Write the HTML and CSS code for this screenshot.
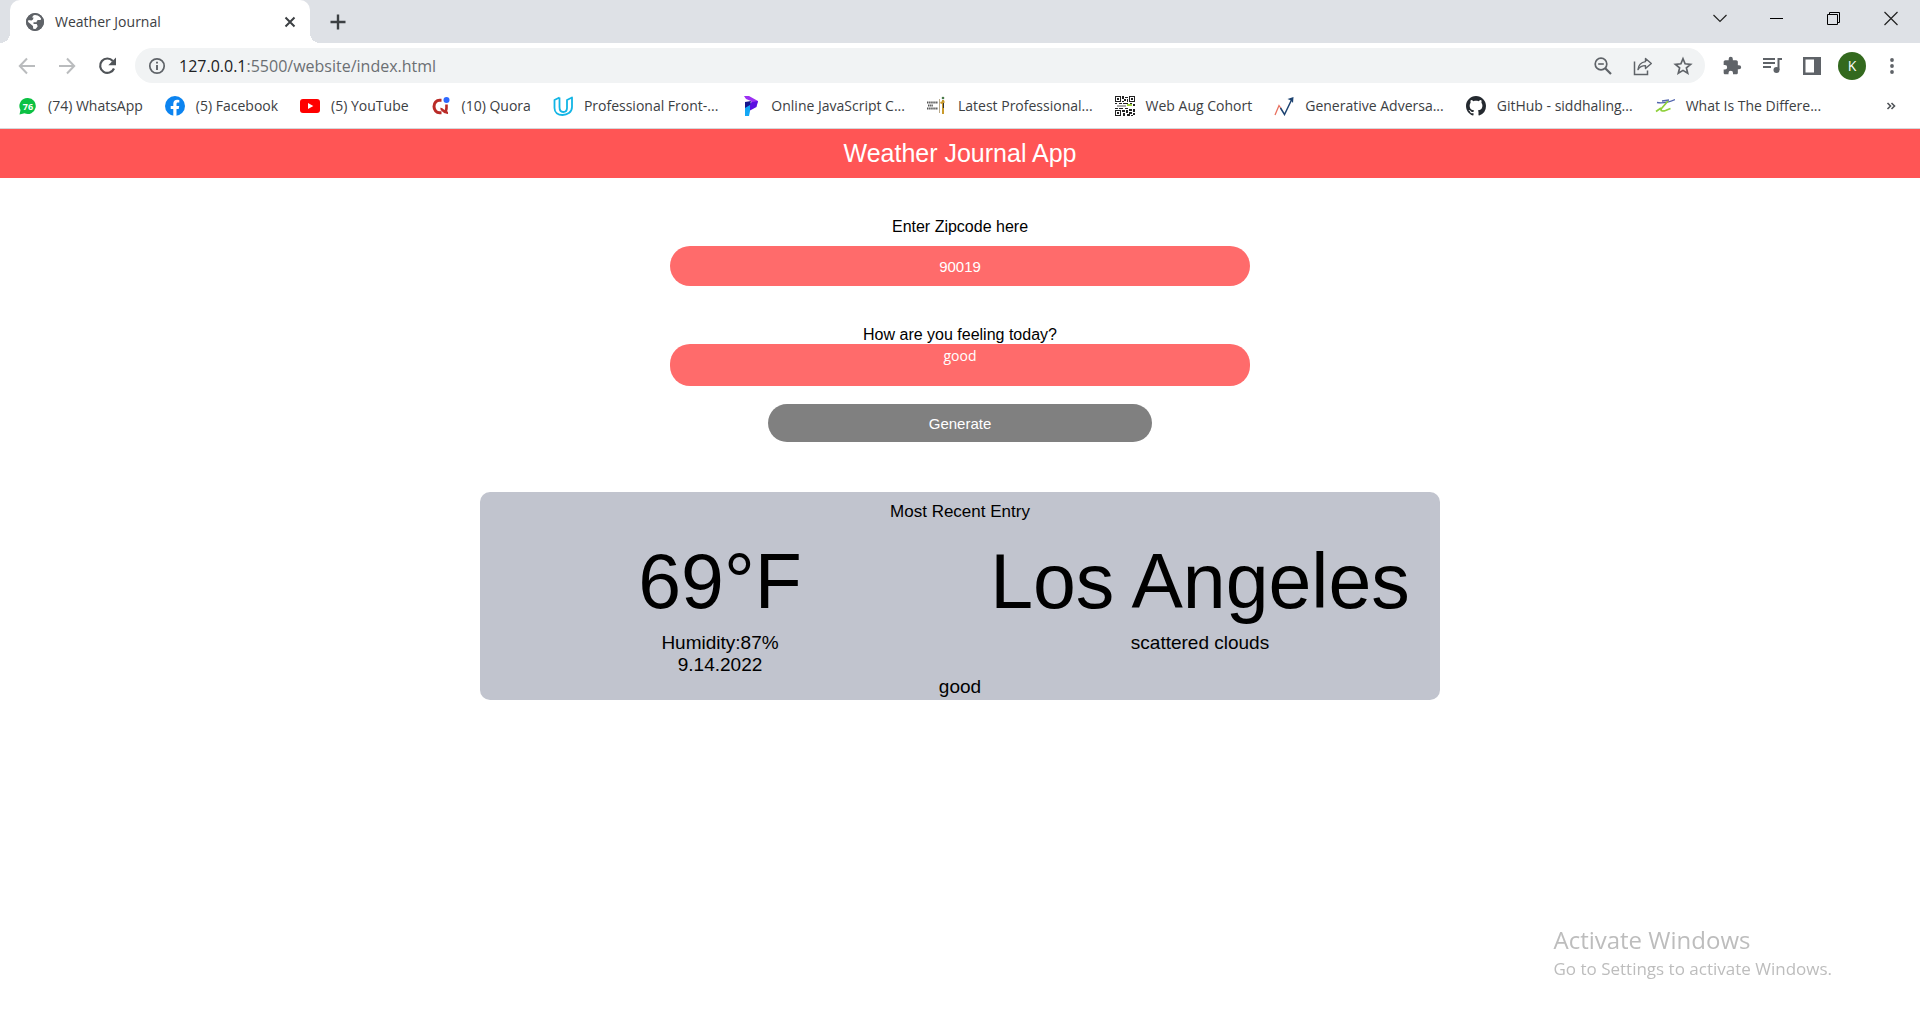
FILE: index.html
```html
<!DOCTYPE html>
<html lang="en">
<head>
<meta charset="utf-8">
<meta name="viewport" content="width=device-width, initial-scale=1">
<title>Weather Journal</title>
<link rel="stylesheet" href="styles.css">
</head>
<body>
<div class="browser">
  <div class="tabstrip">
    <div class="tab">
      <svg class="icon20" viewBox="0 0 20 20"><circle cx="10" cy="10" r="9" fill="#5f6368"/><path d="M9 2.500l5 .5 2.500 3.500-1 1.500h-3l-.8 2.200H8.500V12h3.200l1 2.200-2 2.800-2.500.5L8 14l-3-2.500L2.500 9.500 3 8l3.500.5L8 7.500 8.500 5.500H7z" fill="#fff"/><path d="M11 9.500l4.500 1.500 1 2-2.500.5-1.500-2z" fill="#5f6368"/><circle cx="10" cy="10" r="8" fill="none" stroke="#5f6368" stroke-width="2"/></svg>
      <span class="tab-title">Weather Journal</span>
      <button class="plain" aria-label="Close tab"><svg class="icon20" viewBox="0 0 20 20"><path d="M5.500 5.500l9 9m0-9l-9 9" stroke="#3c4043" stroke-width="2"/></svg></button>
    </div>
    <button class="plain newtab" aria-label="New tab"><svg class="icon20" viewBox="0 0 20 20"><path d="M10 2.500v15M2.500 10h15" stroke="#3c4043" stroke-width="2.400"/></svg></button>
    <div class="window-controls">
      <button class="plain" aria-label="Search tabs"><svg class="icon20" viewBox="0 0 20 20"><path d="M3.500 7l6.500 6.500L16.500 7" fill="none" stroke="#222" stroke-width="1.200"/></svg></button>
      <button class="plain" aria-label="Minimize"><svg class="icon20" viewBox="0 0 20 20"><path d="M3 10.500h13" stroke="#000"/></svg></button>
      <button class="plain" aria-label="Restore"><svg class="icon20" viewBox="0 0 20 20"><path d="M3.500 6.500h10v10h-10zM5.500 6.500v-2h10v10h-2" fill="none" stroke="#000"/></svg></button>
      <button class="plain" aria-label="Close"><svg class="icon20" viewBox="0 0 20 20"><path d="M3.500 4l13 13m0-13l-13 13" stroke="#222" stroke-width="1.200"/></svg></button>
    </div>
  </div>

  <div class="toolbar">
    <div class="nav">
      <button class="plain" aria-label="Back"><svg class="icon20" viewBox="0 0 20 20"><path d="M18 10H3M10 2.500L2.800 10l7.200 7.500" fill="none" stroke="#babcbe" stroke-width="2"/></svg></button>
      <button class="plain" aria-label="Forward"><svg class="icon20" viewBox="0 0 20 20"><path d="M2 10h15M10 2.500l7.200 7.500-7.200 7.500" fill="none" stroke="#babcbe" stroke-width="2"/></svg></button>
      <button class="plain" aria-label="Reload"><svg class="icon20" viewBox="0 0 20 20"><path d="M17 12.500A7.200 7.200 0 1 1 15.800 5" fill="none" stroke="#505458" stroke-width="2.200"/><path d="M19 1.500v7.700h-7.700z" fill="#505458"/></svg></button>
    </div>
    <div class="omnibox">
      <svg class="icon20" viewBox="0 0 20 20"><circle cx="10" cy="10" r="7.200" fill="none" stroke="#5f6368" stroke-width="1.700"/><path d="M10 9v5M10 5.800v1.800" stroke="#5f6368" stroke-width="1.900"/></svg>
      <div class="url" role="textbox" aria-label="Address" contenteditable="true" spellcheck="false"><span class="host">127.0.0.1</span>:5500/website/index.html</div>
      <div class="omni-actions">
        <button class="plain" aria-label="Zoom"><svg class="icon20" viewBox="0 0 20 20"><circle cx="8" cy="8" r="5.800" fill="none" stroke="#5f6368" stroke-width="1.700"/><path d="M5.200 8h5.600" stroke="#5f6368" stroke-width="1.600"/><path d="M12 12l6 6" stroke="#5f6368" stroke-width="2.200"/></svg></button>
        <button class="plain" aria-label="Share"><svg class="icon20" viewBox="0 0 20 20"><path d="M1.500 5.500v13h13v-4" fill="none" stroke="#5f6368" stroke-width="1.500"/><path d="M12.500 2.500l5.800 5-5.800 5V9.600c-3.600 0-6 1.300-7.500 4 .4-4.200 2.800-7.300 7.500-8z" fill="none" stroke="#5f6368" stroke-width="1.400" stroke-linejoin="round"/></svg></button>
        <button class="plain" aria-label="Bookmark"><svg class="icon20" viewBox="0 0 20 20"><path d="M10 2.700l2.100 5.100 5.500.5-4.200 3.600 1.300 5.400-4.700-2.900-4.700 2.900 1.300-5.400-4.200-3.600 5.500-.5z" fill="none" stroke="#5f6368" stroke-width="1.700"/></svg></button>
      </div>
    </div>
    <div class="extras">
      <button class="plain" aria-label="Extensions"><svg class="icon20" viewBox="0 0 24 24"><path d="M20.500 11H19V7c0-1.100-.9-2-2-2h-4V3.500a2.500 2.500 0 0 0-5 0V5H4c-1.100 0-2 .9-2 2v3.800h1.500a2.700 2.700 0 0 1 0 5.400H2V20c0 1.100.9 2 2 2h3.800v-1.500a2.700 2.700 0 0 1 5.400 0V22H17c1.100 0 2-.9 2-2v-4h1.500a2.500 2.500 0 0 0 0-5z" fill="#5f6368"/></svg></button>
      <button class="plain" aria-label="Media"><svg class="icon20" viewBox="0 0 20 20"><path d="M1 3h12M1 7h12M1 11h8M16.500 14V3H20" fill="none" stroke="#5f6368" stroke-width="2"/><circle cx="14.500" cy="14" r="3" fill="#5f6368"/></svg></button>
      <button class="plain" aria-label="Side panel"><svg class="icon20" viewBox="0 0 20 20"><path d="M1 1h18v18H1zM3.500 3.500v13h8.500v-13z" fill="#5f6368" fill-rule="evenodd"/></svg></button>
      <button class="plain avatar" aria-label="Profile">K</button>
      <button class="plain" aria-label="Menu"><svg class="icon20" viewBox="0 0 20 20"><circle cx="10" cy="4" r="1.900" fill="#5f6368"/><circle cx="10" cy="10" r="1.900" fill="#5f6368"/><circle cx="10" cy="16" r="1.900" fill="#5f6368"/></svg></button>
    </div>
  </div>

  <nav class="bookmarks">
    <a href="#"><svg class="icon20" viewBox="0 0 20 20"><path d="M11 2a8 8 0 1 1-3.500 15.300L2.500 18.500l1-4.500A8 8 0 0 1 11 2z" fill="#0cc143"/><text x="11" y="13.500" text-anchor="middle" font-size="9" font-weight="bold" fill="#fff">76</text></svg><span>(74) WhatsApp</span></a>
    <a href="#"><svg class="icon20" viewBox="0 0 20 20"><circle cx="10" cy="10" r="10" fill="#0c84f0"/><path d="M8.300 20v-7H5.700v-3h2.600V7.800c0-2.600 1.500-4 3.900-4l2.100.2v2.500h-1.200c-1.200 0-1.600.7-1.600 1.500v2h2.700l-.5 3h-2.200v7z" fill="#fff"/></svg><span>(5) Facebook</span></a>
    <a href="#"><svg class="icon20" viewBox="0 0 20 20"><rect y="3" width="20" height="14" rx="3" fill="#f00"/><path d="M8 7l5.300 3L8 13z" fill="#fff"/></svg><span>(5) YouTube</span></a>
    <a href="#"><svg class="icon20" viewBox="0 0 20 20"><path d="M10.500 4.300H8.500a5.500 6.200 0 0 0 0 12.400h2" fill="none" stroke="#b92b27" stroke-width="3"/><path d="M15.500 8.500V12c0 2-.8 3.500-2.500 4.500M9.500 13c2.500-.5 2.500 4 7.500 3.700" fill="none" stroke="#b92b27" stroke-width="2.600"/><circle cx="15.500" cy="4" r="3" fill="#2e69ff"/></svg><span>(10) Quora</span></a>
    <a href="#"><svg class="icon20" viewBox="0 0 20 20"><path d="M6.500 1.500L1.500 4v8c0 4.500 3.500 7 8 7s9.500-2.500 9.500-8V1.500L14 4v8c0 2.500-1.500 4-3.800 4M6.500 1.500V11c0 3 1.500 5 3.700 5M14 4v8" fill="none" stroke="#12b5e5" stroke-width="1.800" stroke-linejoin="round"/></svg><span>Professional Front-...</span></a>
    <a href="#"><svg class="icon20" viewBox="0 0 20 20"><path d="M4 0h5l9 5-1 3-4.500 1L11 5 6 3z" fill="#9b30f2"/><path d="M12 6l6-1-1.500 6-6.500 3.500L5 14V11z" fill="#5a0fe0"/><path d="M5 6l6-1-1 4-5 4z" fill="#15158c"/><path d="M5 12l5-3v6l-1 5H5z" fill="#13a7f5"/></svg><span>Online JavaScript C...</span></a>
    <a href="#"><svg class="icon20" viewBox="0 0 20 20"><path d="M0 6.500h11M1 9.500h5M0 12.500h11" stroke="#555" stroke-width="2" stroke-dasharray="1.500 .6"/><path d="M12.500 3v14" stroke="#b9a98a"/><path d="M16 4v14M13.500 7l4-1.500" stroke="#c99a2c" stroke-width="2"/><circle cx="16" cy="2" r="1.300" fill="#4a7a4a"/><path d="M16.500 7v5" stroke="#333"/></svg><span>Latest Professional...</span></a>
    <a href="#"><svg class="icon20" viewBox="0 0 20 20" shape-rendering="crispEdges"><path fill="#222" fill-rule="evenodd" d="M0 0h6v6H0zM1 1v4h4V1zM14 0h6v6h-6zM15 1v4h4V1zM0 14h6v6H0zM1 15v4h4v-4zM2 2h2v2H2zM16 2h2v2h-2zM2 16h2v2H2zM7 0h2v3H7zM10 1h3v1h-3zM9 3h2v2H9zM12 3h1v3h-1zM7 5h2v1H7zM7 14h3v2H7zM11 14h2v3h-2zM8 17h2v3H8zM14 13h3v2h-3zM18 13h2v3h-2zM14 16h3v2h-3zM18 17h2v2h-2zM12 18h3v2h-3zM16 19h2v1h-2zM0 12h3v1H0zM4 12h4v1H4zM10 12h3v1h-3zM0 7h2v1H0zM4 7h3v1H4zM8 7h5v1H8zM15 7h2v1h-2zM18 8h2v2h-2z"/><path d="M2 10h9" stroke="#aaa" stroke-width="2"/><path d="M12 9h5" stroke="#9fd33c" stroke-width="2"/></svg><span>Web Aug Cohort</span></a>
    <a href="#"><svg class="icon20" viewBox="0 0 20 20"><path d="M1 19L5 9.500l2 3" fill="none" stroke="#e8705f" stroke-width="1.300"/><path d="M6.500 12l4 6.500L17.500 4" fill="none" stroke="#1d4371" stroke-width="1.500"/><path d="M13.500 3L19.500 1l-.5 6-2-2.500z" fill="#1d4371"/></svg><span>Generative Adversa...</span></a>
    <a href="#"><svg class="icon20" viewBox="0 0 16 16"><path fill="#24292f" d="M8 0C3.580 0 0 3.580 0 8c0 3.540 2.290 6.530 5.470 7.590.4.070.55-.17.55-.38 0-.19-.01-.82-.01-1.490-2.010.37-2.530-.49-2.690-.94-.09-.23-.48-.94-.82-1.130-.28-.15-.68-.52-.01-.53.63-.01 1.080.58 1.230.82.72 1.210 1.870.87 2.330.66.070-.52.28-.87.51-1.070-1.780-.2-3.640-.89-3.640-3.950 0-.87.31-1.590.82-2.150-.08-.2-.36-1.020.08-2.120 0 0 .67-.21 2.200.82.64-.18 1.320-.27 2-.27s1.360.09 2 .27c1.530-1.040 2.200-.82 2.200-.82.44 1.100.16 1.920.08 2.120.51.56.82 1.270.82 2.150 0 3.070-1.870 3.750-3.650 3.950.29.25.54.73.54 1.480 0 1.070-.01 1.930-.01 2.200 0 .21.15.46.55.38A8.010 8.010 0 0 0 16 8c0-4.420-3.580-8-8-8z"/></svg><span>GitHub - siddhaling...</span></a>
    <a href="#"><svg class="icon20" viewBox="0 0 20 20"><path d="M2 6.500c5 1 11 0 18-3M7 5l7-1" fill="none" stroke="#5265ae" stroke-width="1.300"/><path d="M13 5L6.500 12.500c-1.500 2.500 1 3 4 2l5-2M1 15.500l5-3.500" fill="none" stroke="#8ed03a" stroke-width="1.700"/></svg><span>What Is The Differe...</span></a>
    <button class="plain more" aria-label="More bookmarks"><svg class="icon20" viewBox="0 0 20 20"><path d="M6.500 7l3 3-3 3M10.500 7l3 3-3 3" fill="none" stroke="#505458" stroke-width="1.600"/></svg></button>
  </nav>
</div>

<header class="app-header"><h1>Weather Journal App</h1></header>

<main>
  <form class="entry-form">
    <label class="zip-label" for="zip">Enter Zipcode here</label>
    <input class="field" type="text" id="zip" value="90019">
    <label class="feelings-label" for="feelings">How are you feeling today?</label>
    <textarea class="field feelings" id="feelings">good</textarea>
    <button class="generate" type="button">Generate</button>
  </form>

  <section class="entry">
    <h2>Most Recent Entry</h2>
    <div class="entry-columns">
      <div>
        <div class="headline">69°F</div>
        <div>Humidity:87%</div>
        <div>9.14.2022</div>
      </div>
      <div>
        <div class="headline">Los Angeles</div>
        <div>scattered clouds</div>
      </div>
    </div>
    <div>good</div>
  </section>
</main>

<aside class="watermark">
  <div class="watermark-title">Activate Windows</div>
  <div>Go to Settings to activate Windows.</div>
</aside>
</body>
</html>
```
FILE: styles.css
```css
* { box-sizing: border-box; }

body {
  margin: 0;
  background: #fff;
  color: #000;
  font-family: "Liberation Sans", Arial, sans-serif;
}

.browser {
  font-family: "Open Sans", "Segoe UI", sans-serif;
  font-size: 14px;
  color: #3c4043;
  border-bottom: 1px solid #d5d7da;
}

.plain {
  display: flex;
  padding: 0;
  border: 0;
  background: none;
  color: inherit;
  font: inherit;
}

.icon20 {
  display: block;
  flex: none;
  width: 20px;
  height: 20px;
}

/* Tab strip */
.tabstrip {
  display: flex;
  align-items: center;
  height: 43px;
  padding-left: 10px;
  background: #dee1e6;
}

.tab {
  position: relative;
  display: flex;
  align-items: center;
  gap: 10px;
  width: 300px;
  height: 43px;
  padding: 0 10px 0 15px;
  background: #fff;
  border-radius: 10px 10px 0 0;
}

.tab::before,
.tab::after {
  content: "";
  position: absolute;
  bottom: 0;
  width: 10px;
  height: 10px;
}

.tab::before {
  left: -10px;
  background: radial-gradient(circle at 0 0, #dee1e6 10px, #fff 10px);
}

.tab::after {
  right: -10px;
  background: radial-gradient(circle at 100% 0, #dee1e6 10px, #fff 10px);
}

.tab-title { flex: 1; }

.newtab { margin-left: 18px; }

.window-controls {
  display: flex;
  gap: 37px;
  height: 36px;
  align-items: center;
  align-self: flex-start;
  margin-left: auto;
  padding-right: 19px;
}

/* Toolbar */
.toolbar {
  display: flex;
  align-items: center;
  height: 45px;
  padding-right: 18px;
}

.nav {
  display: flex;
  gap: 20px;
  padding: 0 18px 0 17px;
}

.omnibox {
  display: flex;
  flex: 1;
  align-items: center;
  gap: 12px;
  height: 35px;
  padding: 0 12px;
  background: #f1f3f4;
  border-radius: 18px;
}

.url {
  flex: 1;
  font-size: 16px;
  color: #6b6f73;
}

.host { color: #202124; }

.omni-actions { display: flex; gap: 20px; }

.extras {
  display: flex;
  align-items: center;
  gap: 20px;
  padding-left: 17px;
}

.avatar {
  align-items: center;
  justify-content: center;
  width: 28px;
  height: 28px;
  margin: 0 -4px;
  border-radius: 50%;
  background: #33691e;
  color: #fff;
}

/* Bookmarks bar */
.bookmarks {
  display: flex;
  align-items: center;
  gap: 22px;
  height: 40px;
  padding: 0 19px 5px 17px;
}

.bookmarks a {
  display: flex;
  align-items: center;
  gap: 11px;
  color: inherit;
  text-decoration: none;
  white-space: nowrap;
}

.more { margin-left: auto; }

/* Weather page */
.app-header {
  padding: 10px 0 11px;
  background: #f55;
  color: #fff;
  text-align: center;
}

h1,
h2 {
  margin: 0;
  font-weight: normal;
}

h1 { font-size: 25px; line-height: 28px; }

.entry-form {
  display: flex;
  flex-direction: column;
  align-items: center;
  padding-top: 39px;
  font-size: 16px;
  line-height: 20px;
}

.zip-label { margin-bottom: 9px; }

.field {
  width: calc(30% + 4px);
  height: 40px;
  padding: 2px;
  border: 0;
  border-radius: 20px;
  background: #ff6b6b;
  color: #fff;
  font: 15px "Liberation Sans", Arial, sans-serif;
  text-align: center;
}

.feelings-label { margin-top: 39px; }

.feelings {
  height: 42px;
  margin-top: -1px;
  font: 500 14px/20px "Open Sans", sans-serif;
  resize: none;
}

.generate {
  width: 20%;
  height: 38px;
  margin-top: 18px;
  border: 0;
  border-radius: 20px;
  background: #808080;
  color: #fff;
  font: 15px "Liberation Sans", Arial, sans-serif;
}

.entry {
  width: 50%;
  margin: 50px auto 0;
  padding: 10px 0 2px;
  border-radius: 10px;
  background: #c1c4ce;
  font-size: 19px;
  line-height: 22px;
  text-align: center;
}

h2 { font-size: 17px; line-height: 20px; }

.entry-columns {
  display: grid;
  grid-template-columns: 1fr 1fr;
  padding-top: 14px;
}

.headline {
  padding-bottom: 6px;
  font-size: 77px;
  line-height: 90px;
  white-space: nowrap;
}

/* Desktop watermark, drawn above the page */
.watermark {
  position: fixed;
  right: 88px;
  bottom: 48px;
  color: #bdbdbd;
  font: 17px/26px "Open Sans", "Segoe UI", sans-serif;
}

.watermark-title { font-size: 24px; line-height: 32px; }
```
